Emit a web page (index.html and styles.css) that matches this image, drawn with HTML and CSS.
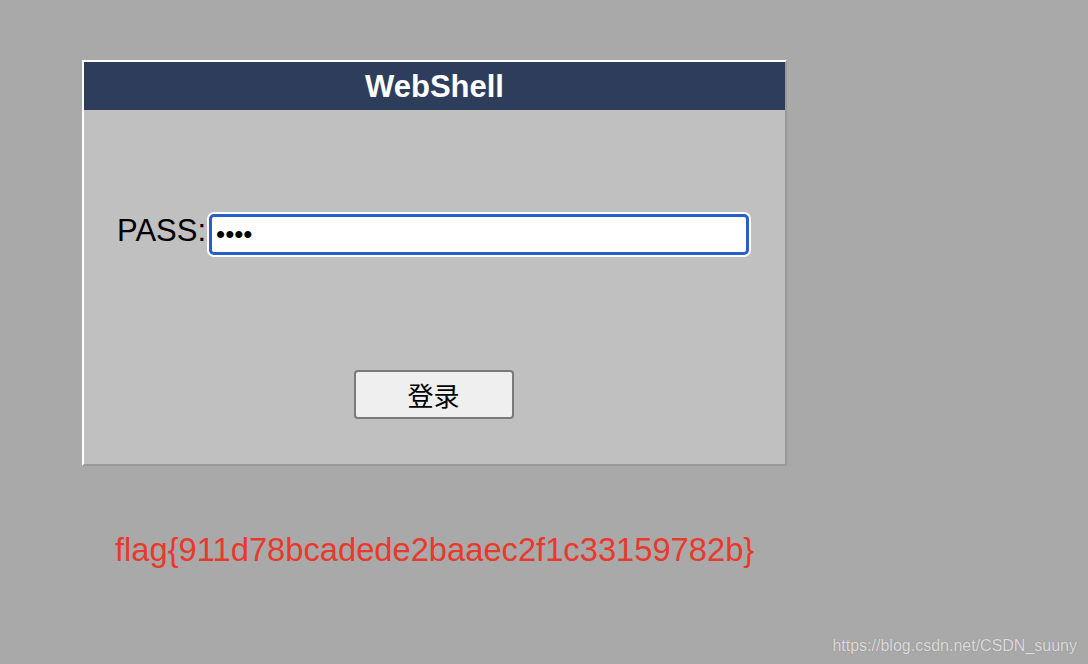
FILE: index.html
```html
<!DOCTYPE html>
<html lang="zh">
<head>
<meta charset="utf-8">
<title>WebShell</title>
<link rel="stylesheet" href="styles.css">
</head>
<body>
<div class="page">
  <form class="panel" onsubmit="return false;">
    <div class="panel-head">WebShell</div>
    <div class="panel-body">
      <div class="pass-row">
        <label class="pass-label" for="pass">PASS:</label>
        <input class="pass-input" id="pass" type="password" value="1234">
      </div>
      <button class="login-btn" type="submit">登录</button>
    </div>
  </form>
  <div class="flag">flag{911d78bcadede2baaec2f1c33159782b}</div>
</div>
<div class="watermark">https://blog.csdn.net/CSDN_suuny</div>
</body>
</html>
```

FILE: styles.css
```css
html, body {
  margin: 0;
  padding: 0;
}

body {
  background: #a9a9a9;
  width: 1088px;
  height: 664px;
  overflow: hidden;
  position: relative;
  font-family: "Liberation Sans", Arial, sans-serif;
}

.page {
  padding: 60px 0 0 82px;
}

.panel {
  width: 701px;
  border-style: solid;
  border-width: 2px;
  border-color: #ffffff #999999 #999999 #ffffff;
  background: #c0c0c0;
  margin: 0;
}

.panel-head {
  height: 48px;
  line-height: 50px;
  background: #2e3d5c;
  color: #ffffff;
  font-weight: bold;
  font-size: 31px;
  text-align: center;
}

.panel-body {
  height: 354px;
  box-sizing: border-box;
  padding-top: 102px;
  display: flex;
  flex-direction: column;
  align-items: center;
}

.pass-row {
  align-self: stretch;
  display: flex;
  align-items: flex-start;
  gap: 3px;
  padding-left: 33px;
  height: 45px;
}

.pass-label {
  font-size: 31px;
  color: #000;
  line-height: 37px;
  padding-bottom: 8px;
}

.pass-input {
  width: 540px;
  height: 41px;
  box-sizing: border-box;
  border: 3px solid #2b5fc8;
  border-radius: 5px;
  box-shadow: 0 0 0 2px #ffffff;
  background: #ffffff;
  outline: none;
  padding: 0 0 0 4px;
  margin: 2px 0 0 0;
  font-family: "Liberation Sans", Arial, sans-serif;
  font-size: 26px;
  letter-spacing: 0;
  color: #000;
}

.login-btn {
  margin-top: 113px;
  margin-left: -2px;
  width: 160px;
  height: 49px;
  box-sizing: border-box;
  border: 2px solid #7a7a7a;
  border-radius: 4px;
  background: #efefef;
  font-family: "Noto Sans CJK SC", "Liberation Sans", sans-serif;
  font-size: 26px;
  color: #000;
  padding: 0;
  cursor: pointer;
}

.flag {
  margin-top: 64px;
  margin-left: 33px;
  color: #e8392c;
  font-size: 32.7px;
  line-height: 40px;
}

.watermark {
  position: absolute;
  right: 11px;
  top: 637px;
  font-size: 16px;
  color: #dcdcdc;
  text-shadow: 0 0 1px rgba(90, 90, 90, 0.5);
}
```
